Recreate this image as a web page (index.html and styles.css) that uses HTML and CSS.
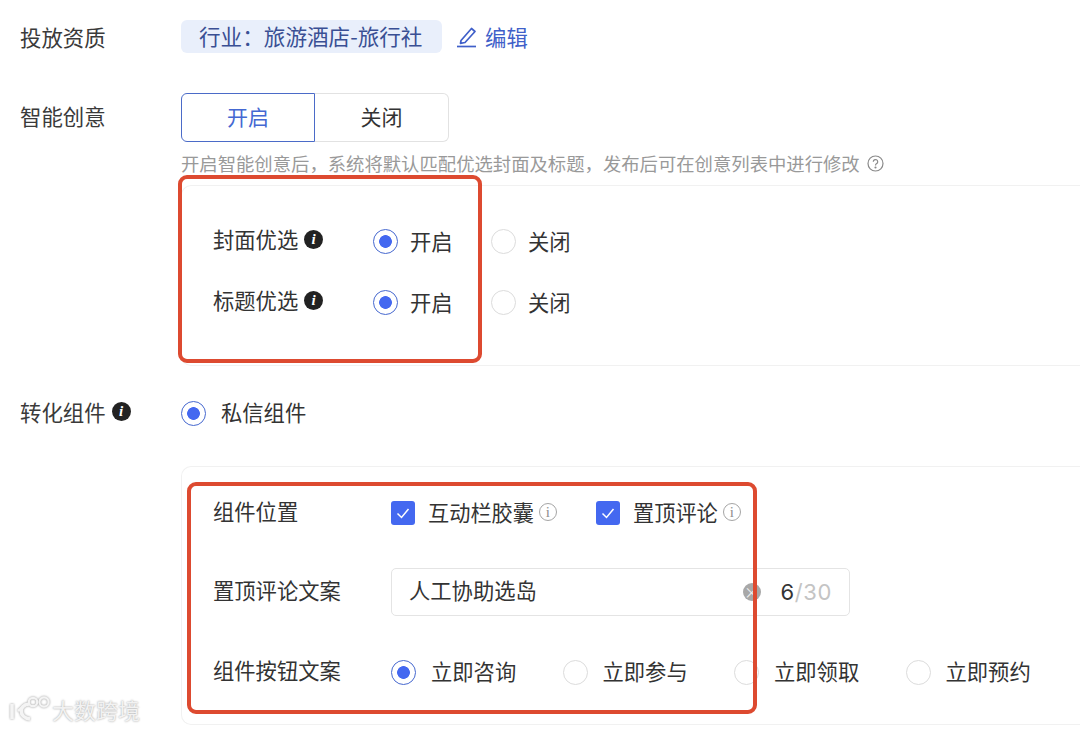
FILE: index.html
```html
<!DOCTYPE html>
<html lang="en">
<head>
    <meta charset="UTF-8">
    <meta name="viewport" content="width=device-width, initial-scale=1.0">
    <title>投放设置</title>
    <link rel="stylesheet" href="styles.css">
</head>
<body>
    <div class="form">
        <div class="row row-quality">
            <div class="label">投放资质</div>
            <div class="tag">行业：旅游酒店-旅行社</div>
            <a class="edit">
                <svg width="22" height="22" viewBox="0 0 22 22" fill="none" stroke="#3f5fc9" stroke-width="1.7"><path d="M4 14.5 14.5 2.5l3.5 3L8 16.5l-4.5.8z" stroke-linejoin="round"/><path d="M0 20.5h19"/></svg>
                编辑
            </a>
        </div>

        <div class="row row-smart">
            <div class="label">智能创意</div>
            <div class="segment">
                <div class="seg-btn seg-on">开启</div>
                <div class="seg-btn seg-off">关闭</div>
            </div>
        </div>
        <div class="hint">
            开启智能创意后，系统将默认匹配优选封面及标题，发布后可在创意列表中进行修改
            <svg width="17" height="17" viewBox="0 0 17 17" fill="none" stroke="#8a8a8a" stroke-width="1.2"><circle cx="8.5" cy="8.5" r="7.5"/><path d="M6.3 6.8a2.2 2.2 0 1 1 3.4 1.8c-.8.5-1.2.9-1.2 1.8"/><circle cx="8.5" cy="12.5" r=".5"/></svg>
        </div>

        <div class="panel panel-smart">
            <div class="sub-row">
                <div class="sub-label">封面优选 <span class="info-dark">i</span></div>
                <div class="radio radio-on radio-a">开启</div>
                <div class="radio">关闭</div>
            </div>
            <div class="sub-row">
                <div class="sub-label">标题优选 <span class="info-dark">i</span></div>
                <div class="radio radio-on radio-a">开启</div>
                <div class="radio">关闭</div>
            </div>
        </div>

        <div class="row row-convert">
            <div class="label">转化组件 <span class="info-dark">i</span></div>
            <div class="radio radio-on">私信组件</div>
        </div>

        <div class="panel panel-comp">
            <div class="comp-row comp-pos">
                <div class="comp-label">组件位置</div>
                <div class="check check-a">
                    <span class="check-box"><svg width="24" height="24" viewBox="0 0 24 24" fill="none" stroke="#fff" stroke-width="1.5"><path d="M6.5 12.5l4 4 7-8.5"/></svg></span>
                    互动栏胶囊 <span class="info-light">i</span>
                </div>
                <div class="check">
                    <span class="check-box"><svg width="24" height="24" viewBox="0 0 24 24" fill="none" stroke="#fff" stroke-width="1.5"><path d="M6.5 12.5l4 4 7-8.5"/></svg></span>
                    置顶评论 <span class="info-light">i</span>
                </div>
            </div>
            <div class="comp-row comp-copy">
                <div class="comp-label">置顶评论文案</div>
                <div class="input">
                    <span class="input-text">人工协助选岛</span>
                    <span class="clear">×</span>
                    <span class="count">6<em>/30</em></span>
                </div>
            </div>
            <div class="comp-row comp-btn">
                <div class="comp-label">组件按钮文案</div>
                <div class="radio radio-on btn-radio">立即咨询</div>
                <div class="radio btn-radio">立即参与</div>
                <div class="radio btn-radio">立即领取</div>
                <div class="radio btn-radio">立即预约</div>
            </div>
        </div>
    </div>

    <div class="red-box red-one"></div>
    <div class="red-box red-two"></div>

    <div class="watermark">
        <svg class="wm-logo" width="42" height="28" viewBox="0 0 42 28" fill="none" stroke="#f4f4f4" stroke-width="3.6"><path d="M3 9v15"/><path d="M20 9C10 10 9 22 21 24"/><path d="M9 16l8-7" stroke-width="2.6"/><circle cx="24" cy="7" r="4.2" stroke-width="2.2"/><circle cx="35" cy="7" r="4.6" stroke-width="2.2"/></svg>
        <span>大数跨境</span>
    </div>
</body>
</html>
```

FILE: styles.css
```css
body {
    margin: 0;
    width: 1080px;
    height: 731px;
    overflow: hidden;
    position: relative;
    background: #fff;
    color: #333;
    font-family: "Noto Sans CJK SC", "Liberation Sans", sans-serif;
}

.form {
    padding: 20px 0 0 20px;
}

.row {
    display: flex;
    align-items: center;
}

.label {
    width: 161px;
    flex-shrink: 0;
    font-size: 21.4px;
    line-height: 34px;
    color: #3a3a3a;
}

.row-quality {
    height: 33px;
}

.tag {
    width: 261px;
    height: 33px;
    box-sizing: border-box;
    padding-left: 18px;
    background: #e9effb;
    border-radius: 6px;
    color: #3a4f94;
    font-size: 21.6px;
    line-height: 32px;
    white-space: nowrap;
}

.edit {
    display: flex;
    align-items: center;
    gap: 6px;
    margin-left: 15px;
    color: #3f5fc9;
    font-size: 21.4px;
    line-height: 32px;
}

.row-smart {
    margin-top: 40px;
    height: 49px;
    align-items: flex-start;
}

.row-smart .label {
    line-height: 46px;
}

.segment {
    display: flex;
}

.seg-btn {
    width: 134px;
    height: 49px;
    box-sizing: border-box;
    text-align: center;
    font-size: 21px;
    line-height: 44px;
}

.seg-on {
    border: 1.5px solid #4b6bc8;
    border-radius: 6px 0 0 6px;
    color: #4468d2;
}

.seg-off {
    border: 1.5px solid #e2e2e2;
    border-left: none;
    border-radius: 0 6px 6px 0;
    color: #333;
}

.hint {
    display: flex;
    align-items: center;
    gap: 7px;
    margin: 8px 0 0 161px;
    height: 27px;
    line-height: 23px;
    font-size: 18.35px;
    color: #999;
    white-space: nowrap;
}

.panel {
    margin-left: 161px;
    border: 1.5px solid #f1f1f1;
    border-right: none;
    border-radius: 10px 0 0 10px;
    box-sizing: border-box;
}

.panel-smart {
    height: 181px;
    margin-top: 8px;
    padding: 25px 0 0 31px;
}

.sub-row {
    display: flex;
    align-items: center;
    height: 61px;
}

.sub-label {
    width: 160px;
    flex-shrink: 0;
    display: flex;
    align-items: center;
    gap: 6px;
    font-size: 21.3px;
    line-height: 30px;
    color: #333;
    padding-bottom: 5px;
}

.info-dark {
    display: inline-block;
    width: 19px;
    height: 19px;
    border-radius: 50%;
    background: #222;
    color: #fff;
    font: italic bold 15px/19px "Liberation Serif", serif;
    text-align: center;
}

.info-light {
    display: inline-block;
    width: 16px;
    height: 16px;
    border: 1px solid #a5a5a5;
    border-radius: 50%;
    color: #8f8f8f;
    font: 15px/16px "Liberation Serif", serif;
    text-align: center;
}

.radio {
    display: flex;
    align-items: center;
    gap: 12px;
    padding-bottom: 2px;
    font-size: 21.3px;
    line-height: 30px;
    color: #333;
    white-space: nowrap;
}

.radio::before {
    content: "";
    width: 25px;
    height: 25px;
    box-sizing: border-box;
    flex-shrink: 0;
    margin-top: 2px;
    border: 1.5px solid #dcdcdc;
    border-radius: 50%;
    background: #fff;
}

.radio-on::before {
    border-color: #4668cf;
    background: radial-gradient(circle, #4468f0 0 6px, #fff 6.7px);
}

.radio-a {
    width: 118px;
}

.row-convert {
    margin-top: 30px;
    height: 34px;
}

.row-convert .label {
    display: flex;
    align-items: center;
    gap: 6px;
    line-height: 30px;
    padding-bottom: 3px;
}

.row-convert .radio {
    gap: 15px;
}

.panel-comp {
    height: 259px;
    margin-top: 36px;
    padding: 0 0 0 31px;
}

.comp-row {
    display: flex;
    align-items: center;
}

.comp-label {
    width: 178px;
    flex-shrink: 0;
    font-size: 21.3px;
    line-height: 30px;
    padding-bottom: 5px;
    color: #333;
}

.comp-pos {
    height: 34px;
    margin-top: 29px;
}

.check {
    display: flex;
    align-items: center;
    gap: 5px;
    padding-bottom: 2px;
    font-size: 21.2px;
    line-height: 30px;
    color: #333;
    white-space: nowrap;
}

.check-box {
    width: 24px;
    height: 24px;
    margin: 2px 8px 0 0;
    border-radius: 3px;
    background: #4468f0;
}

.check-a {
    width: 205px;
}

.comp-copy {
    height: 48px;
    margin-top: 38px;
}

.input {
    width: 459px;
    height: 48px;
    box-sizing: border-box;
    display: flex;
    align-items: center;
    padding: 0 17px;
    border: 1.5px solid #e4e4e4;
    border-radius: 5px;
    font-size: 21.3px;
    line-height: 30px;
}

.input-text {
    flex: 1;
    padding-bottom: 4px;
}

.clear {
    width: 18px;
    height: 18px;
    margin-right: 20px;
    border-radius: 50%;
    background: #a8a8a8;
    color: #eee;
    font-size: 15px;
    line-height: 18px;
    text-align: center;
}

.count {
    font-family: "Inter", sans-serif;
    font-size: 22px;
    letter-spacing: 0.6px;
    color: #333;
}

.count em {
    font-style: normal;
    color: #c4c4c4;
}

.comp-btn {
    height: 34px;
    margin-top: 39px;
}

.btn-radio {
    width: 171.5px;
    gap: 15px;
}

.red-box {
    position: absolute;
    box-sizing: border-box;
    border: 4px solid #dd4a30;
    border-radius: 9px;
}

.red-one {
    left: 178px;
    top: 175px;
    width: 304px;
    height: 188px;
}

.red-two {
    left: 187px;
    top: 482px;
    width: 570px;
    height: 232px;
}

.watermark {
    position: absolute;
    left: 9px;
    top: 695px;
    display: flex;
    align-items: center;
    gap: 1px;
    font-size: 22px;
    line-height: 28px;
    color: #f2f2f2;
    text-shadow: 0 0 2px #999;
}

.wm-logo {
    filter: drop-shadow(0 0 1px #999);
}
```
